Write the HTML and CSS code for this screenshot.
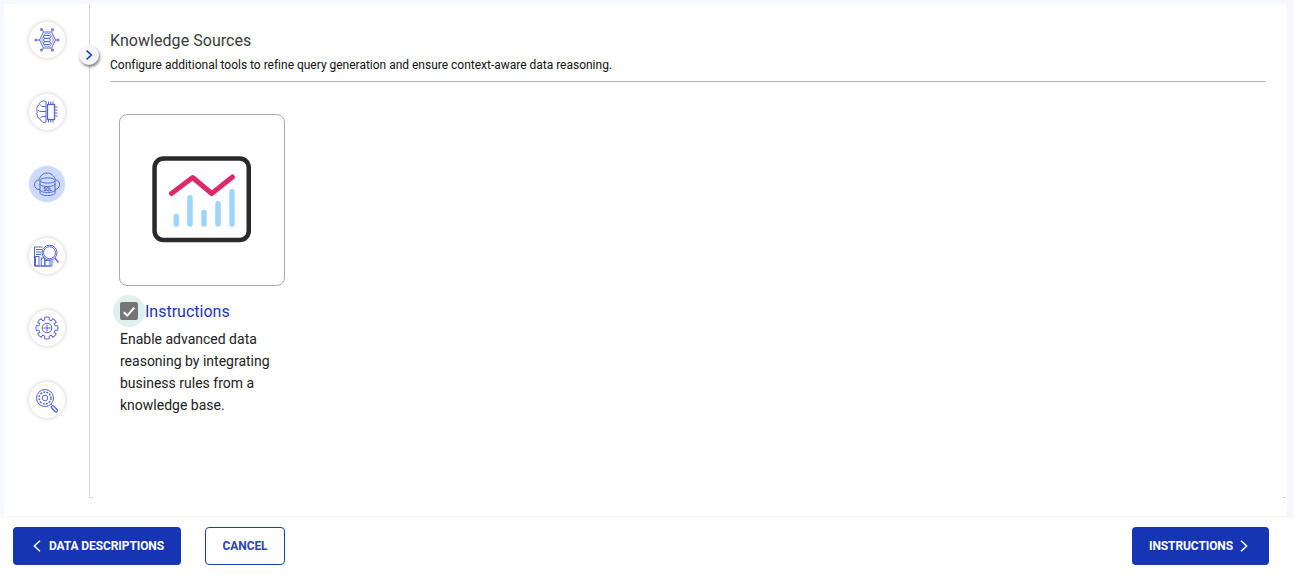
FILE: index.html
```html
<!DOCTYPE html>
<html lang="en">
<head>
<meta charset="utf-8">
<title>Knowledge Sources</title>
<link rel="stylesheet" href="styles.css">
</head>
<body>
<div class="page">
  <div class="panel">
    <nav class="rail">
      <span class="step">
        <svg class="step-icon" viewBox="0 0 28 28"><g class="ln"><path d="M6.500 14l4-8h8l4 8-4 8h-8z"/><path class="thin" d="M8.500 14l3.200-6.200h5.600L20.500 14l-3.200 6.200h-5.600z"/><rect x="10.800" y="9.500" width="6.400" height="2.800" rx=".8"/><rect x="10.800" y="12.600" width="6.400" height="2.800" rx=".8"/><rect x="10.800" y="15.700" width="6.400" height="2.800" rx=".8"/><path d="M6.500 14H4M22.500 14H24M10.500 6L9 4M18.500 6L20 4M10.500 22L9 24M18.500 22L20 24"/></g><g class="dot"><circle cx="3" cy="14" r="1.600"/><circle cx="25" cy="14" r="1.600"/><circle cx="8.500" cy="3.500" r="1.600"/><circle cx="19.500" cy="3.500" r="1.600"/><circle cx="8.500" cy="24" r="1.600"/><circle cx="19.500" cy="24" r="1.600"/></g></svg>
      </span>
      <span class="step">
        <svg class="step-icon" viewBox="0 0 28 28"><g class="ln"><path d="M13 3.500C9.500 2 6.500 4 6 6.500 3.800 8 3.200 11.500 4.200 13.500 3.200 16.500 4.500 20 7 21 8.500 24 11 25 13 24z"/><path d="M13 8.500H9M13 13.500H6.500M13 18.500H9M9 8.500L7 6.500M9 18.500l-2 2M6.500 13.500L5 12"/><rect class="heavy" x="14.500" y="6.500" width="7" height="15"/><path d="M15.500 6.500v-3M17.800 6.500v-3M20 6.500v-3M15.500 21.500v3M17.800 21.500v3M20 21.500v3M21.500 9h3M21.500 12h3M21.500 15h3M21.500 18h3"/></g></svg>
      </span>
      <span class="step is-active">
        <svg class="step-icon" viewBox="0 0 28 28"><g class="ln"><path d="M7 19.500H6C3 19.500 1.500 17 1.500 14.500 1.500 12 3.500 10 6 10 7 6 10 3 14 3s7.500 3 8.500 7c2.500 0 4 2 4 4.500 0 2.500-1.500 5-4.500 5"/><ellipse cx="14.500" cy="10.500" rx="7.500" ry="2.600"/><path d="M7 10.500v12.500c0 1.400 3.400 2.500 7.500 2.500s7.500-1.100 7.500-2.500V10.500M7 14c0 1.400 3.400 2.500 7.500 2.500S22 15.400 22 14M7 20c0 1.400 3.400 2.500 7.500 2.500S22 21.400 22 20"/></g><text class="sql" x="14.500" y="20.500">SQL</text></svg>
      </span>
      <span class="step">
        <svg class="step-icon" viewBox="0 0 28 28"><g class="ln"><path d="M9.500 5h-8v19H19v-6"/><path d="M3 7.500h6M3 10h5.500M3 12.500h5"/><rect x="2.500" y="14.500" width="3.500" height="9.500"/><rect x="8.200" y="16" width="3.500" height="8"/><rect x="12" y="18.500" width="5" height="5.500"/><circle cx="16.500" cy="10.700" r="7.500"/><circle cx="16.500" cy="10.700" r="6"/><path class="heavy" d="M22 16l3.500 4.500"/></g></svg>
      </span>
      <span class="step">
        <svg class="step-icon" viewBox="0 0 28 28"><defs><path id="gear-tooth" d="M10.800 6.300L11.900 5.900 11.600 3.300Q14 2.600 16.400 3.300L16.100 5.900 17.200 6.300"/></defs><g class="ln"><use href="#gear-tooth"/><use href="#gear-tooth" transform="rotate(45 14 14)"/><use href="#gear-tooth" transform="rotate(90 14 14)"/><use href="#gear-tooth" transform="rotate(135 14 14)"/><use href="#gear-tooth" transform="rotate(180 14 14)"/><use href="#gear-tooth" transform="rotate(225 14 14)"/><use href="#gear-tooth" transform="rotate(270 14 14)"/><use href="#gear-tooth" transform="rotate(315 14 14)"/><circle cx="14" cy="14" r="4.800"/><path d="M14 10.500v7M10.500 14h7"/></g></svg>
      </span>
      <span class="step">
        <svg class="step-icon" viewBox="0 0 28 28"><g class="ln"><circle cx="12" cy="12" r="8.500"/><circle class="dash" cx="12" cy="12" r="6"/><circle cx="12" cy="12" r="2.800"/><path d="M18 18l1.500 1.500"/><path class="heavy" d="M20.500 20l3.500 3.500a1.300 1.300 0 0 1-2 2L18.800 22a1.300 1.300 0 0 1 1.700-2z"/></g></svg>
      </span>
    </nav>
    <button class="toggle" type="button" aria-label="Expand">
      <svg class="toggle-icon" viewBox="0 0 10 14"><path d="M2 1.500L8 7l-6 5.500"/></svg>
    </button>
    <main class="content">
      <header class="head">
        <h1 class="title">Knowledge Sources</h1>
        <p class="subtitle">Configure additional tools to refine query generation and ensure context-aware data reasoning.</p>
      </header>
      <section class="source">
        <div class="tile">
          <svg class="chart" viewBox="0 0 100 88">
            <rect class="chart-frame" x="2.550" y="2.450" width="94.200" height="81.500" rx="9"/>
            <path class="chart-line" d="M19.500 37.500L40.700 21.500 59.700 37.500 80.500 21"/>
            <path class="chart-bars" d="M24.300 60.500V68M38 41.800V68M52 56.500V68M66 47.800V68M80 35.800V68"/>
          </svg>
        </div>
        <label class="check">
          <span class="check-halo"><span class="check-box"><svg class="check-mark" viewBox="0 0 18 18"><path d="M3.800 10.300l3.500 3.300 7-8"/></svg></span></span>
          <span class="check-label">Instructions</span>
        </label>
        <p class="desc">Enable advanced data reasoning by integrating business rules from a knowledge base.</p>
      </section>
    </main>
  </div>
  <footer class="bar">
    <button class="btn btn-solid btn-back" type="button"><svg class="chev" viewBox="0 0 8 12"><path d="M7 .7L1.300 6 7 11.300"/></svg>Data Descriptions</button>
    <button class="btn btn-line" type="button">Cancel</button>
    <button class="btn btn-solid btn-next" type="button">Instructions<svg class="chev" viewBox="0 0 8 12"><path d="M1 .7L6.700 6 1 11.300"/></svg></button>
  </footer>
</div>
</body>
</html>
```
FILE: styles.css
```css
* { box-sizing: border-box; }
html, body { margin: 0; height: 100%; }
body {
  background: #f5f8ff;
  font-family: Roboto, "Liberation Sans", sans-serif;
  color: #212121;
  overflow: hidden;
}
.page { width: 1294px; height: 575px; display: flex; flex-direction: column; }

.panel {
  position: relative;
  margin: 4px 7px 0 4px;
  height: 512px;
  padding-bottom: 18px;
  background: #fff;
  display: flex;
}
.rail {
  width: 86px;
  flex: none;
  padding: 18px 0 0 25px;
  display: flex;
  flex-direction: column;
  gap: 36px;
  border-right: 1px solid #d6d6d6;
  align-items: flex-start;
}
.step {
  width: 36px;
  height: 36px;
  border-radius: 50%;
  background: #fff;
  box-shadow: 0 0 4px rgba(60, 70, 110, .28);
  display: flex;
  align-items: center;
  justify-content: center;
}
.step.is-active { background: #cddafd; box-shadow: 0 0 2px rgba(60, 70, 110, .12); }
.step-icon { width: 28px; height: 28px; }
.ln { fill: none; stroke: #5368cf; stroke-width: 1; }
.thin { stroke-width: .7; }
.heavy { stroke-width: 1.300; }
.dash { stroke-dasharray: 2 1.200; stroke-width: 1.400; }
.dot { fill: #7485dc; }
.sql { font-size: 4.500px; font-weight: 700; fill: #3e52b8; text-anchor: middle; font-family: Roboto, sans-serif; }

.toggle {
  position: absolute;
  left: 75px;
  top: 41px;
  width: 20px;
  height: 20px;
  padding: 0;
  border: 0;
  border-radius: 50%;
  background: #f4f6fb;
  box-shadow: 1px 2px 3px rgba(0, 0, 0, .5);
  display: flex;
  align-items: center;
  justify-content: center;
}
.toggle-icon { width: 8px; height: 12px; fill: none; stroke: #1a3ab8; stroke-width: 1.900; }

.content {
  position: relative;
  flex: 1;
  padding: 27px 21px 0 20px;
}
.content::before,
.content::after {
  content: "";
  position: absolute;
  bottom: 0;
  width: 3px;
  height: 1px;
  background: #d6d6d6;
}
.content::before { left: 0; }
.content::after { right: 1px; }
.head { border-bottom: 1px solid #b0b0b0; height: 51px; }
.title { margin: 0; font-size: 16px; font-weight: 400; line-height: 20px; letter-spacing: .05px; color: #3a3a3a; }
.subtitle { margin: 6px 0 0; font-size: 12px; line-height: 16px; letter-spacing: -.01px; color: #111; }

.source { width: 166px; margin: 32px 0 0 9px; }
.tile {
  width: 166px;
  height: 172px;
  border: 1px solid #aaa;
  border-radius: 8px;
  display: flex;
  align-items: center;
  justify-content: center;
}
.chart { width: 100px; height: 88px; margin-top: -1px; }
.chart-frame { fill: none; stroke: #2a2a2a; stroke-width: 4.500; }
.chart-line { fill: none; stroke: #df2a6a; stroke-width: 5; stroke-linecap: round; stroke-linejoin: round; }
.chart-bars { fill: none; stroke: #9ed4fd; stroke-width: 5.500; stroke-linecap: round; }

.check { display: flex; align-items: center; margin: 9px 0 0 -6px; }
.check-halo {
  width: 32px;
  height: 32px;
  border-radius: 50%;
  background: #e0f0ee;
  display: flex;
  align-items: center;
  justify-content: center;
  flex: none;
}
.check-box { width: 18px; height: 18px; border-radius: 2px; background: #757575; display: block; }
.check-mark { display: block; width: 18px; height: 18px; fill: none; stroke: #fff; stroke-width: 2; }
.check-label { margin-left: 0; padding-top: 2px; font-size: 16px; line-height: 20px; color: #1a36b8; }
.desc { margin: 1px 0 0 1px; font-size: 14px; line-height: 22px; color: #212121; }

.bar {
  flex: 1;
  background: #fff;
  border-top: 1px solid #f3f3f3;
  display: flex;
  align-items: flex-start;
  padding: 10px 25px 0 13px;
}
.btn {
  height: 38px;
  border-radius: 4px;
  font-family: Roboto, "Liberation Sans", sans-serif;
  font-size: 12px;
  font-weight: 700;
  letter-spacing: -.1px;
  text-transform: uppercase;
  display: flex;
  align-items: center;
  padding: 0;
}
.btn-solid { background: #1535b5; color: #fff; border: 0; }
.btn-line { background: #fff; color: #2a43b8; border: 1px solid #1f3bb0; width: 80px; margin-left: 24px; justify-content: center; }
.btn-back { width: 168px; gap: 8px; padding-left: 20px; }
.btn-next { width: 137px; gap: 7px; padding-left: 17px; margin-left: auto; }
.chev { width: 8px; height: 12px; flex: none; margin-top: -1px; fill: none; stroke: #fff; stroke-width: 1.500; }
```
